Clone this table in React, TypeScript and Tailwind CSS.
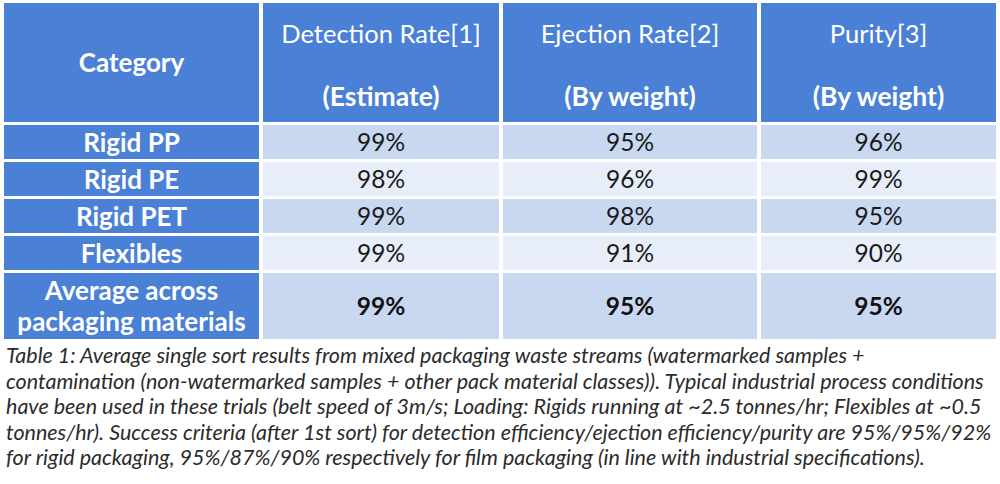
import React from "react";

const rows = [
  { name: "Rigid PP", values: ["99%", "95%", "96%"], shade: "dark" },
  { name: "Rigid PE", values: ["98%", "96%", "99%"], shade: "light" },
  { name: "Rigid PET", values: ["99%", "98%", "95%"], shade: "dark" },
  { name: "Flexibles", values: ["99%", "91%", "90%"], shade: "light" },
];

const headers = [
  { top: "Detection Rate[1]", bottom: "(Estimate)" },
  { top: "Ejection Rate[2]", bottom: "(By weight)" },
  { top: "Purity[3]", bottom: "(By weight)" },
];

export default function App() {
  return (
    <div className="w-[1000px] h-[484px] bg-white overflow-hidden font-['Lato',sans-serif]">
      {/* Table */}
      <div className="ml-[4px] pt-[3px] grid grid-cols-[255px_236px_254px_235px] gap-x-[4px] gap-y-[3px]">
        <div className="h-[119px] bg-[#4b80d7] flex items-center justify-center text-white text-[26px] font-bold">
          Category
        </div>
        {headers.map((h) => (
          <div
            key={h.top}
            className="h-[119px] bg-[#4b80d7] flex flex-col items-center justify-between pt-[15px] pb-[11px] text-white leading-[30px]"
          >
            <span className="text-[25.5px]">{h.top}</span>
            <span className="text-[26.5px] font-bold">{h.bottom}</span>
          </div>
        ))}

        {rows.map((r) => (
          <React.Fragment key={r.name}>
            <div className="h-[34px] bg-[#4b80d7] flex items-center justify-center text-white text-[26px] font-bold">
              {r.name}
            </div>
            {r.values.map((v, i) => (
              <div
                key={i}
                className={
                  "h-[34px] flex items-center justify-center text-[#1a1a1a] text-[24.5px] " +
                  (r.shade === "dark" ? "bg-[#c8d8f1]" : "bg-[#e8eef9]")
                }
              >
                {v}
              </div>
            ))}
          </React.Fragment>
        ))}

        <div className="h-[66px] bg-[#4b80d7] flex flex-col items-center justify-center text-white text-[26px] font-bold leading-[31px]">
          <span>Average across</span>
          <span>packaging materials</span>
        </div>
        {["99%", "95%", "95%"].map((v, i) => (
          <div
            key={i}
            className="h-[66px] bg-[#c8d8f1] flex items-center justify-center text-[#111] text-[24.5px] font-bold"
          >
            {v}
          </div>
        ))}
      </div>

      {/* Caption */}
      <p className="mt-[4px] ml-[6px] italic text-[#2b2b2b] text-[21.5px] leading-[25.5px] whitespace-nowrap">
        <span className="block">
          Table 1: Average single sort results from mixed packaging waste streams (watermarked samples +
        </span>
        <span className="block">
          contamination (non-watermarked samples + other pack material classes)). Typical industrial process conditions
        </span>
        <span className="block">
          have been used in these trials (belt speed of 3m/s; Loading: Rigids running at ~2.5 tonnes/hr; Flexibles at ~0.5
        </span>
        <span className="block">
          tonnes/hr). Success criteria (after 1st sort) for detection efficiency/ejection efficiency/purity are 95%/95%/92%
        </span>
        <span className="block">
          for rigid packaging, 95%/87%/90% respectively for film packaging (in line with industrial specifications).
        </span>
      </p>
    </div>
  );
}
